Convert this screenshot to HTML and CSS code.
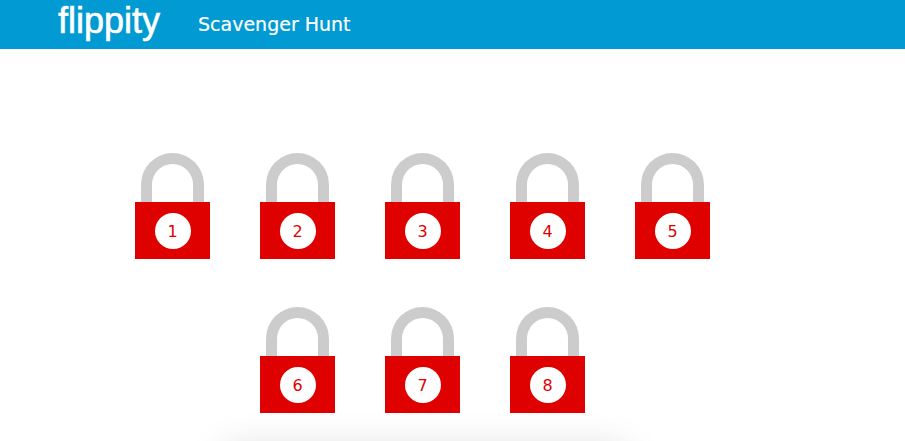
FILE: index.html
```html
<!DOCTYPE html>
<html lang="en">
<head>
  <meta charset="UTF-8" />
  <title>Scavenger Hunt - Flippity</title>
  <link rel="stylesheet" href="styles.css">
</head>
<body>

  <nav>
    <a class="logo" href="#">flippity</a>
    <h2>Scavenger Hunt</h2>
  </nav>

  <main>
    <div class="locks">
      <div class="lock"><div class="shackle"></div><div class="body"><span class="num">1</span></div></div>
      <div class="lock"><div class="shackle"></div><div class="body"><span class="num">2</span></div></div>
      <div class="lock"><div class="shackle"></div><div class="body"><span class="num">3</span></div></div>
      <div class="lock"><div class="shackle"></div><div class="body"><span class="num">4</span></div></div>
      <div class="lock"><div class="shackle"></div><div class="body"><span class="num">5</span></div></div>
      <div class="lock"><div class="shackle"></div><div class="body"><span class="num">6</span></div></div>
      <div class="lock"><div class="shackle"></div><div class="body"><span class="num">7</span></div></div>
      <div class="lock"><div class="shackle"></div><div class="body"><span class="num">8</span></div></div>
    </div>
    <div class="panel"></div>
  </main>

</body>
</html>
```

FILE: styles.css
```css
body {
  font-family: "DejaVu Sans", "Noto Sans", sans-serif;
  margin: 0;
  background-color: #fff;
  color: #333;
}

nav {
  background-color: #019ad2;
  height: 49px;
  padding-left: 58px;
  display: flex;
  align-items: center;
  color: white;
}

.logo {
  width: 140px;
  align-self: flex-start;
  font-family: "Liberation Sans", sans-serif;
  font-size: 36px;
  -webkit-text-stroke: 0.6px white;
  color: white;
  text-decoration: none;
}

nav h2 {
  margin: 0 0 2px;
  font-size: 19px;
  font-weight: 400;
  -webkit-text-stroke: 0.2px white;
}

main {
  height: 288px;
  padding: 104px 0 0 110px;
  overflow: hidden;
}

.locks {
  width: 625px;
  display: flex;
  flex-wrap: wrap;
  justify-content: center;
  row-gap: 48px;
}

.lock {
  width: 75px;
  margin: 0 25px;
}

.shackle {
  box-sizing: border-box;
  width: 63px;
  height: 49px;
  margin: 0 auto;
  border: 11px solid #ccc;
  border-bottom: none;
  border-radius: 32px 32px 0 0;
}

.body {
  height: 57px;
  background: #df0000;
  display: flex;
  align-items: center;
  justify-content: center;
}

.num {
  width: 36px;
  height: 36px;
  border-radius: 50%;
  background: #fff;
  color: #df0000;
  font-size: 16px;
  line-height: 37px;
  text-align: center;
}

.panel {
  width: 400px;
  height: 200px;
  margin: 38px 0 0 115px;
  box-shadow: 0 0 36px rgba(0,0,0,0.17);
}
```
